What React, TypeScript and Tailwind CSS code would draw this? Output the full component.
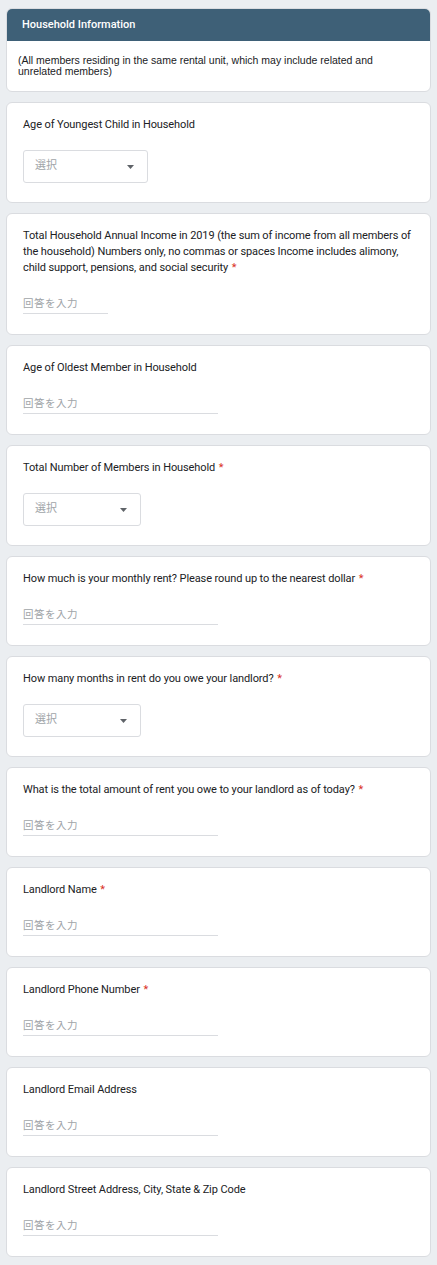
const questions: { label: string; required?: boolean; type: 'select' | 'text'; width?: string }[] = [
  { label: 'Age of Youngest Child in Household', type: 'select', width: 'w-[125px]' },
  {
    label:
      'Total Household Annual Income in 2019 (the sum of income from all members of the household) Numbers only, no commas or spaces Income includes alimony, child support, pensions, and social security',
    required: true,
    type: 'text',
    width: 'w-[85px]',
  },
  { label: 'Age of Oldest Member in Household', type: 'text' },
  { label: 'Total Number of Members in Household', required: true, type: 'select', width: 'w-[118px]' },
  { label: 'How much is your monthly rent? Please round up to the nearest dollar', required: true, type: 'text' },
  { label: 'How many months in rent do you owe your landlord?', required: true, type: 'select', width: 'w-[118px]' },
  { label: 'What is the total amount of rent you owe to your landlord as of today?', required: true, type: 'text' },
  { label: 'Landlord Name', required: true, type: 'text' },
  { label: 'Landlord Phone Number', required: true, type: 'text' },
  { label: 'Landlord Email Address', type: 'text' },
  { label: 'Landlord Street Address, City, State & Zip Code', type: 'text' },
];

function SelectBox({ width }: { width: string }) {
  return (
    <div className={`mt-[17px] h-[33px] ${width} rounded-[3px] border border-[#dadce0] bg-white flex items-center justify-between pl-[11px] pr-[13px]`}>
      <span className="text-[11px] text-[#a0a4a8]">選択</span>
      <svg width="7" height="4" viewBox="0 0 7 4">
        <path d="M0 0 L7 0 L3.5 4 Z" fill="#5f6368" />
      </svg>
    </div>
  );
}

function TextBox({ width }: { width: string }) {
  return (
    <div className={`mt-[18px] h-[20px] ${width} border-b border-[#dadce0] flex items-center`}>
      <span className="text-[10.5px] text-[#a0a4a8] tracking-[0.5px]">回答を入力</span>
    </div>
  );
}

export default function App() {
  return (
    <div
      className="min-h-screen bg-[#ebeef1] px-[6px] pt-[8px] pb-[8px] flex flex-col gap-[10px]"
      style={{ fontFamily: 'Roboto, "Noto Sans CJK JP", sans-serif' }}
    >
      {/* Section header */}
      <div className="rounded-[6px] border border-[#dadce0] bg-white overflow-hidden">
        <div className="h-[32px] bg-[#3e6077] flex items-center pl-[15px]">
          <span className="text-[11px] font-medium text-white">Household Information</span>
        </div>
        <div
          className="pl-[11px] pr-[40px] pt-[14px] pb-[14px] text-[10.5px] leading-[11px] text-[#202124]"
          style={{ fontFamily: '"Liberation Sans", Arial, sans-serif' }}
        >
          (All members residing in the same rental unit, which may include related and unrelated members)
        </div>
      </div>

      {questions.map((q, i) => (
        <div
          key={i}
          className={`rounded-[6px] border border-[#dadce0] bg-white px-[16px] pt-[14px] ${q.type === 'select' ? 'pb-[19px]' : 'pb-[20px]'}`}
        >
          <div className="text-[11px] leading-[16px] tracking-[-0.1px] text-[#202124]">
            {q.label}
            {q.required && (
              <>
                {' '}
                <span className="ml-[1px] text-[#d93025]">*</span>
              </>
            )}
          </div>
          {q.type === 'select' ? <SelectBox width={q.width || 'w-[118px]'} /> : <TextBox width={q.width || 'w-[195px]'} />}
        </div>
      ))}
    </div>
  );
}
